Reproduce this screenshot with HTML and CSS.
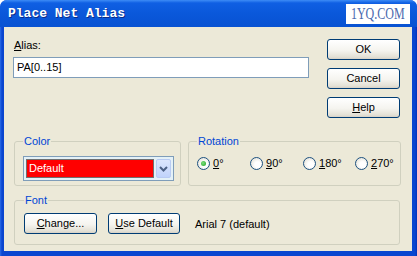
FILE: index.html
```html
<!DOCTYPE html>
<html lang="en">
<head>
    <meta charset="UTF-8">
    <title>Place Net Alias</title>
    <link rel="stylesheet" href="styles.css">
</head>
<body>

    <div class="window">
        <div class="titlebar">
            <span class="title">Place Net Alias</span>
            <span class="mark"><span>1YQ.COM</span></span>
        </div>

        <div class="client">
            <div class="top">
                <div class="alias">
                    <label><u>A</u>lias:</label>
                    <div class="input">PA[0..15]</div>
                </div>
                <div class="buttons">
                    <button class="btn">OK</button>
                    <button class="btn">Cancel</button>
                    <button class="btn"><u>H</u>elp</button>
                </div>
            </div>

            <div class="groups">
                <fieldset class="color">
                    <legend>Color</legend>
                    <div class="select">
                        <span class="value">Default</span>
                        <span class="drop">
                            <svg width="9" height="6" viewBox="0 0 9 6"><path d="M1 1 L4.5 4.5 L8 1" fill="none" stroke="#4D6185" stroke-width="2"/></svg>
                        </span>
                    </div>
                </fieldset>
                <fieldset class="rotation">
                    <legend>Rotation</legend>
                    <div class="radios">
                        <span class="radio"><i class="dot checked"></i><span><u>0</u>&deg;</span></span>
                        <span class="radio"><i class="dot"></i><span><u>9</u>0&deg;</span></span>
                        <span class="radio"><i class="dot"></i><span><u>1</u>80&deg;</span></span>
                        <span class="radio"><i class="dot"></i><span><u>2</u>70&deg;</span></span>
                    </div>
                </fieldset>
            </div>

            <fieldset class="font">
                <legend>Font</legend>
                <div class="fontrow">
                    <button class="btn"><u>C</u>hange...</button>
                    <button class="btn"><u>U</u>se Default</button>
                    <span class="fontname">Arial 7 (default)</span>
                </div>
            </fieldset>
        </div>
    </div>

</body>
</html>
```

FILE: styles.css
```css
*{
    padding: 0;
    margin: 0;
    box-sizing: border-box;
}
body{
    font: 11px "Liberation Sans", Arial, sans-serif;
    color: #000;
    background: #fff;
}
.window{
    width: 417px;
    height: 256px;
    display: flex;
    flex-direction: column;
    background: linear-gradient(90deg, #2A6CE8 0, #0A46D0 2px, #0A46D0 calc(100% - 2px), #0332B8 100%);
    border-radius: 7px 7px 0 0;
    overflow: hidden;
}
.titlebar{
    height: 27px;
    flex: none;
    display: flex;
    align-items: center;
    justify-content: space-between;
    padding: 0 7px 0 8px;
    background: linear-gradient(#3D8CF6 0, #0F5FE3 3px, #0A58DA 50%, #0852D2 100%);
}
.title{
    font: bold 13px "Liberation Mono", monospace;
    color: #fff;
    text-shadow: 1px 1px #0B2D8A;
}
.mark{
    width: 64px;
    height: 20px;
    background: #fff;
    display: flex;
    align-items: center;
    justify-content: center;
}
.mark span{
    font: 16px "Liberation Serif", serif;
    color: #4A69AE;
    transform: scaleX(.75);
    white-space: nowrap;
}
.client{
    flex: 1;
    margin: 0 5px 5px 4px;
    background: #ECE9D8;
    padding: 12px 12px 0 10px;
    display: flex;
    flex-direction: column;
}

/* top: alias + buttons */
.top{
    display: flex;
    justify-content: space-between;
}
.alias label{
    display: block;
    line-height: 13px;
}
.input{
    width: 296px;
    height: 21px;
    margin: 5px 0 0 -1px;
    border: 1px solid #7F9DB9;
    background: #fff;
    padding: 0 3px;
    line-height: 19px;
}
.buttons{
    display: flex;
    flex-direction: column;
    gap: 8px;
}
.btn{
    width: 73px;
    height: 21px;
    border: 1px solid #003C74;
    border-radius: 3px;
    background: linear-gradient(#FFFFFF, #F5F4EF 55%, #E3E0D5 90%, #D6D0C5);
    font: 11px "Liberation Sans", Arial, sans-serif;
    color: #000;
    text-align: center;
    line-height: 19px;
}

/* group boxes */
fieldset{
    border: 1px solid #D0D0BF;
    border-radius: 3px;
}
legend{
    color: #0046D5;
    padding: 0 1px;
    line-height: 13px;
}
.groups{
    display: flex;
    gap: 7px;
    margin-top: 17px;
}
.color{
    width: 167px;
    padding: 8px 6px 4px 8px;
}
.rotation{
    flex: 1;
    padding: 8px 6px 4px 8px;
}
.select{
    width: 151px;
    height: 25px;
    border: 1px solid #7F9DB9;
    background: #E4F1F7;
    padding: 2px;
    display: flex;
    gap: 2px;
}
.value{
    flex: 1;
    background: #FF0000;
    border: 1px solid #707070;
    color: #fff;
    padding-left: 2px;
    line-height: 17px;
}
.drop{
    width: 15px;
    border: 1px solid #B9CBF3;
    border-radius: 2px;
    background: linear-gradient(#DCE6FD, #C1D3FB);
    display: flex;
    align-items: center;
    justify-content: center;
}
.radios{
    display: grid;
    grid-template-columns: 53px 53px 52px auto;
    padding-top: 1px;
}
.radio{
    display: flex;
    align-items: center;
    gap: 3px;
    line-height: 13px;
}
.dot{
    width: 13px;
    height: 13px;
    border: 1px solid #1C5180;
    border-radius: 50%;
    background: radial-gradient(circle at 60% 60%, #FFFFFF 30%, #DCD9CB 100%);
    display: flex;
    align-items: center;
    justify-content: center;
}
.checked::after{
    content: "";
    width: 5px;
    height: 5px;
    border-radius: 50%;
    background: radial-gradient(circle at 40% 40%, #7DE07D, #21A121);
}

.font{
    margin-top: 8px;
    padding: 6px 8px 10px 9px;
}
.fontrow{
    display: flex;
    align-items: center;
}
.fontrow .btn + .btn{
    width: 72px;
    margin-left: 11px;
}
.fontname{
    margin-left: 15px;
}
```
